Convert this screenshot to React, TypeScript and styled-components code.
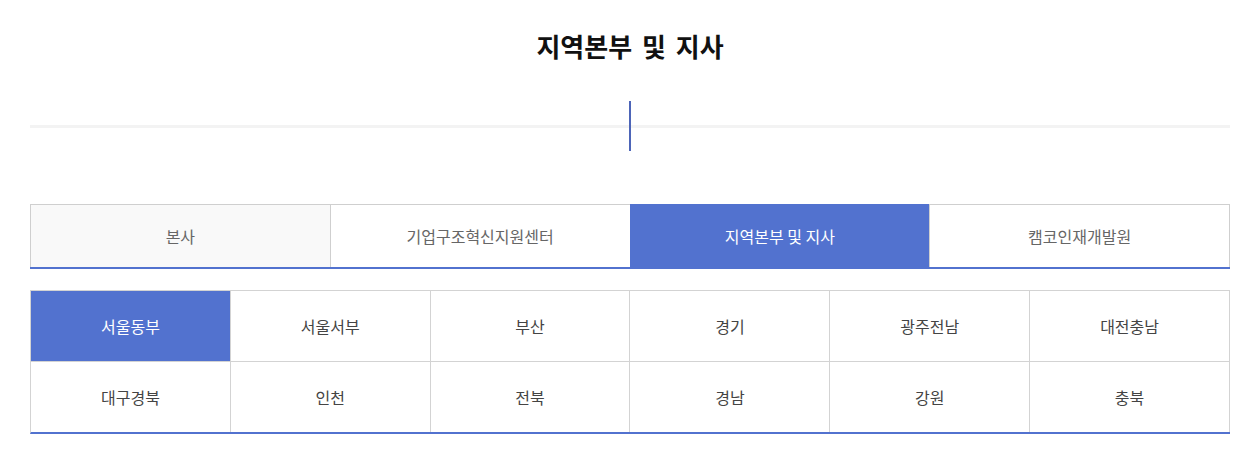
import React, { useState } from "react";
import styled, { createGlobalStyle } from "styled-components";

const GlobalStyle = createGlobalStyle`
  body {
    margin: 0;
    background: #fff;
    font-family: "Noto Sans CJK KR", "Noto Sans", sans-serif;
  }
`;

const BLUE = "#5272cf";

const Page = styled.div`
  width: 1200px;
  padding: 29px 25px 40px 30px;
`;

const Title = styled.h2`
  margin: 0;
  text-align: center;
  font-size: 26px;
  line-height: 34px;
  font-weight: 700;
  color: #111;
  word-spacing: 4px;
`;

const Divider = styled.div`
  position: relative;
  display: flex;
  justify-content: center;
  height: 50px;
  margin-top: 38px;
  &::before {
    content: "";
    position: absolute;
    left: 0;
    right: 0;
    top: 24px;
    height: 3px;
    background: #f3f3f3;
  }
`;

const Stem = styled.span`
  position: relative;
  width: 2px;
  height: 50px;
  background: #4d65b8;
`;

const TabList = styled.ul`
  display: flex;
  margin: 53px 0 0;
  padding: 0;
  list-style: none;
  border-bottom: 2px solid ${BLUE};
`;

const Tab = styled.li<{ $active?: boolean; $first?: boolean }>`
  flex: 1;
  height: 63px;
  box-sizing: border-box;
  display: flex;
  align-items: center;
  justify-content: center;
  font-size: 16px;
  cursor: pointer;
  border-top: 1px solid ${(p) => (p.$active ? BLUE : "#cfcfcf")};
  border-left: 1px solid ${(p) => (p.$active ? BLUE : "#cfcfcf")};
  color: ${(p) => (p.$active ? "#fff" : "#666")};
  background: ${(p) => (p.$active ? BLUE : p.$first ? "#f9f9f9" : "#fff")};
  &:last-child {
    border-right: 1px solid #cfcfcf;
  }
`;

const Grid = styled.div`
  display: grid;
  grid-template-columns: repeat(6, 1fr);
  margin-top: 21px;
  border-top: 1px solid #d3d3d3;
  border-left: 1px solid #d3d3d3;
  border-bottom: 2px solid ${BLUE};
`;

const Cell = styled.div<{ $active?: boolean; $topRow?: boolean }>`
  height: ${(p) => (p.$topRow ? "71px" : "70px")};
  box-sizing: border-box;
  display: flex;
  align-items: center;
  justify-content: center;
  font-size: 16px;
  cursor: pointer;
  border-right: 1px solid #d3d3d3;
  border-bottom: ${(p) => (p.$topRow ? "1px solid #d3d3d3" : "none")};
  color: ${(p) => (p.$active ? "#fff" : "#444")};
  background: ${(p) => (p.$active ? BLUE : "#fff")};
`;

const tabs = ["본사", "기업구조혁신지원센터", "지역본부 및 지사", "캠코인재개발원"];
const branches = [
  "서울동부", "서울서부", "부산", "경기", "광주전남", "대전충남",
  "대구경북", "인천", "전북", "경남", "강원", "충북",
];

export default function App() {
  const [tab, setTab] = useState(2);
  const [branch, setBranch] = useState(0);
  return (
    <>
      <GlobalStyle />
      <Page>
        <Title>지역본부 및 지사</Title>
        <Divider>
          <Stem />
        </Divider>
        <TabList>
          {tabs.map((t, i) => (
            <Tab key={t} $first={i === 0} $active={i === tab} onClick={() => setTab(i)}>
              {t}
            </Tab>
          ))}
        </TabList>
        <Grid>
          {branches.map((b, i) => (
            <Cell key={b} $topRow={i < 6} $active={i === branch} onClick={() => setBranch(i)}>
              {b}
            </Cell>
          ))}
        </Grid>
      </Page>
    </>
  );
}
